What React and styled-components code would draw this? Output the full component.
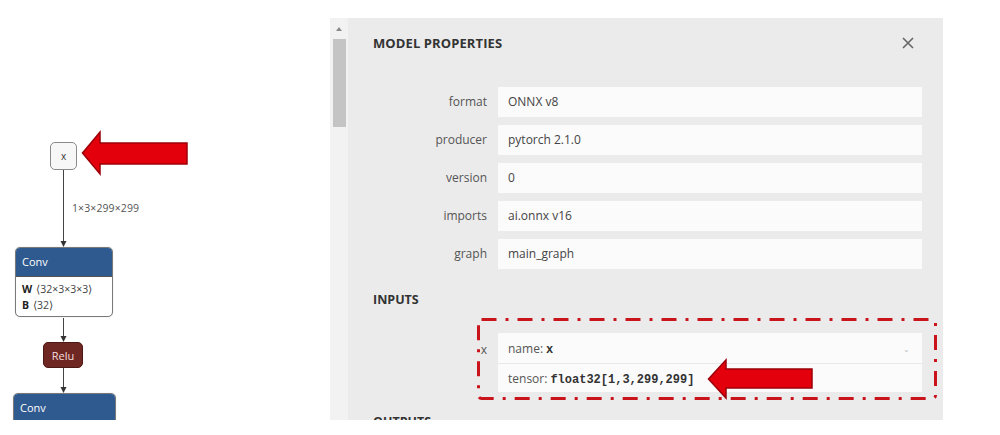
import React from "react";
import styled, { createGlobalStyle } from "styled-components";

const Global = createGlobalStyle`
  html, body { margin: 0; padding: 0; background: #ffffff; }
  body { font-family: "Open Sans", "Noto Sans", sans-serif; }
  * { box-sizing: border-box; }
`;

const Page = styled.div`
  display: flex;
  width: 1000px;
  height: 435px;
  background: #fff;
  overflow: hidden;
`;

/* ---------- graph ---------- */
const Canvas = styled.div`
  position: relative;
  width: 330px;
  height: 420px;
  flex-shrink: 0;
  overflow: hidden;
  font-family: "Open Sans", "Noto Sans", sans-serif;
`;

const Edges = styled.svg`
  position: absolute;
  left: 0;
  top: 0;
`;

const InputNode = styled.div`
  position: absolute;
  left: ${(p) => p.x}px;
  top: ${(p) => p.y}px;
  width: 27px;
  height: 28px;
  border: 1.5px solid #8a8a8a;
  border-radius: 5px;
  background: #f7f7f7;
  display: flex;
  align-items: center;
  justify-content: center;
  font-size: 10px;
  color: #333;
`;

const EdgeLabel = styled.div`
  position: absolute;
  left: ${(p) => p.x}px;
  top: ${(p) => p.y}px;
  font-size: 10.5px;
  color: #555;
  letter-spacing: 0.1px;
`;

const OpNode = styled.div`
  position: absolute;
  left: ${(p) => p.x}px;
  top: ${(p) => p.y}px;
  width: ${(p) => p.w}px;
  border: 1px solid #7a7a7a;
  border-radius: 5px;
  overflow: hidden;
  background: #fff;
  box-shadow: 0 0 1px rgba(0, 0, 0, 0.3);
`;

const OpHeader = styled.div`
  height: ${(p) => p.h || 28}px;
  background: #2f5a90;
  color: #fff;
  font-size: 11px;
  padding: 6px 0 0 6px;
`;

const OpAttrs = styled.div`
  padding: 4px 6px 3px;
  font-size: 10.5px;
  line-height: 16px;
  color: #444;
  border-top: 1px solid #555;
  b { font-weight: 700; color: #222; margin-right: 4px; }
`;

const ActNode = styled.div`
  position: absolute;
  left: ${(p) => p.x}px;
  top: ${(p) => p.y}px;
  width: 40px;
  height: 26px;
  border-radius: 5px;
  background: #6e2722;
  border: 1px solid #4e1814;
  color: #f4dede;
  font-size: 11px;
  display: flex;
  align-items: center;
  justify-content: center;
`;

const Callout = styled.svg`
  position: absolute;
  left: ${(p) => p.x}px;
  top: ${(p) => p.y}px;
  overflow: visible;
`;

/* ---------- panel ---------- */
const Panel = styled.div`
  margin-top: 18px;
  width: 613px;
  height: 402px;
  background: #ebebeb;
  display: flex;
  overflow: hidden;
  flex-shrink: 0;
`;

const ScrollTrack = styled.div`
  width: 18px;
  flex-shrink: 0;
  background: #f2f2f2;
  display: flex;
  flex-direction: column;
  align-items: center;
  padding-top: 9px;
  gap: 8px;
`;

const ScrollArrow = styled.div`
  width: 0;
  height: 0;
  border-left: 3px solid transparent;
  border-right: 3px solid transparent;
  border-bottom: 4px solid #8a8a8a;
`;

const ScrollThumb = styled.div`
  width: 13px;
  height: 88px;
  background: #c4c4c4;
`;

const Content = styled.div`
  flex: 1;
  padding: 0 21px 0 25px;
  display: flex;
  flex-direction: column;
  & > * { flex-shrink: 0; }
`;

const Header = styled.div`
  height: 50px;
  display: flex;
  align-items: center;
  justify-content: space-between;
  padding-right: 8px;
`;

const Title = styled.div`
  font-size: 13px;
  font-weight: 700;
  color: #333;
  letter-spacing: 0.1px;
`;

const Close = styled.svg`
  display: block;
`;

const Grid = styled.div`
  display: grid;
  grid-template-columns: 114px 1fr;
  column-gap: 11px;
  row-gap: 8px;
  margin-top: ${(p) => p.mt || 0}px;
  position: relative;
`;

const Label = styled.div`
  text-align: right;
  font-size: 12px;
  line-height: ${(p) => (p.small ? 16 : 30)}px;
  padding-top: ${(p) => (p.small ? 9 : 0)}px;
  color: #555;
`;

const Value = styled.div`
  height: 30px;
  background: #fbfbfb;
  padding-left: 10px;
  font-size: 12px;
  line-height: 30px;
  color: #444;
`;

const Section = styled.div`
  margin-top: ${(p) => p.mt}px;
  font-size: 12.5px;
  font-weight: 700;
  line-height: 16px;
  color: #333;
`;

const ArgBox = styled.div`
  background: #fbfbfb;
  display: flex;
  flex-direction: column;
`;

const ArgLine = styled.div`
  height: ${(p) => p.h}px;
  padding: 0 10px;
  display: flex;
  align-items: center;
  justify-content: space-between;
  font-size: 12px;
  color: #555;
  border-top: ${(p) => (p.divided ? "1px solid #e8e8e8" : "none")};
  b {
    font-family: "Liberation Mono", "DejaVu Sans Mono", monospace;
    font-weight: 700;
    color: #333;
    margin-left: 3px;
  }
`;

const Chevron = styled.span`
  font-size: 8px;
  color: #bbb;
  margin-right: 2px;
`;

const Overlay = styled.svg`
  position: absolute;
  left: ${(p) => p.x}px;
  top: ${(p) => p.y}px;
  overflow: visible;
  pointer-events: none;
`;

const properties = [
  ["format", "ONNX v8"],
  ["producer", "pytorch 2.1.0"],
  ["version", "0"],
  ["imports", "ai.onnx v16"],
  ["graph", "main_graph"],
];

function RedArrow({ w, h, head, shaftTop, shaftBottom }) {
  const mid = h / 2;
  return (
    <polygon
      points={`1.5,${mid} ${head},1 ${head},${shaftTop} ${w - 1},${shaftTop} ${w - 1},${shaftBottom} ${head},${shaftBottom} ${head},${h - 1}`}
      fill="#e3000c"
      stroke="#9c0008"
      strokeWidth="1.5"
      strokeLinejoin="miter"
    />
  );
}

export default function App() {
  return (
    <>
      <Global />
      <Page>
        <Canvas>
          <Edges width="330" height="420">
            <line x1="63.5" y1="170" x2="63.5" y2="246" stroke="#444" strokeWidth="1" />
            <path d="M60.5,241 L63.5,247 L66.5,241 Z" fill="#333" />
            <line x1="63.5" y1="318" x2="63.5" y2="341" stroke="#444" strokeWidth="1" />
            <path d="M60.5,336 L63.5,342 L66.5,336 Z" fill="#333" />
            <line x1="63.5" y1="368" x2="63.5" y2="392" stroke="#444" strokeWidth="1" />
            <path d="M60.5,387 L63.5,393 L66.5,387 Z" fill="#333" />
          </Edges>

          <InputNode x={50} y={142}>x</InputNode>
          <EdgeLabel x={72} y={201}>1×3×299×299</EdgeLabel>

          <OpNode x={15} y={247} w={98}>
            <OpHeader>Conv</OpHeader>
            <OpAttrs>
              <div><b>W</b>⟨32×3×3×3⟩</div>
              <div><b>B</b>⟨32⟩</div>
            </OpAttrs>
          </OpNode>

          <ActNode x={43} y={342}>Relu</ActNode>

          <OpNode x={13} y={393} w={103}>
            <OpHeader h={40}>Conv</OpHeader>
          </OpNode>

          <Callout x={81} y={131} width="107" height="44">
            <RedArrow w={107} h={44} head={19} shaftTop={12} shaftBottom={33} />
          </Callout>
        </Canvas>

        <Panel>
          <ScrollTrack>
            <ScrollArrow />
            <ScrollThumb />
          </ScrollTrack>
          <Content>
            <Header>
              <Title>MODEL PROPERTIES</Title>
              <Close width="12" height="12" viewBox="0 0 12 12">
                <path d="M1,1 L11,11 M11,1 L1,11" stroke="#666" strokeWidth="1.6" />
              </Close>
            </Header>

            <Grid mt={19}>
              {properties.map(([k, v]) => (
                <React.Fragment key={k}>
                  <Label>{k}</Label>
                  <Value>{v}</Value>
                </React.Fragment>
              ))}
            </Grid>

            <Section mt={23}>INPUTS</Section>

            <Grid mt={25}>
              <Label small>x</Label>
              <ArgBox>
                <ArgLine h={30}>
                  <span>name:<b>x</b></span>
                  <Chevron>⌄</Chevron>
                </ArgLine>
                <ArgLine h={29} divided>
                  <span>tensor:<b>float32[1,3,299,299]</b></span>
                </ArgLine>
              </ArgBox>

              <Overlay x={104} y={-15} width="460" height="82">
                <rect
                  x="1.5"
                  y="1.5"
                  width="457"
                  height="79"
                  rx="3"
                  fill="none"
                  stroke="#c9141c"
                  strokeWidth="3"
                  strokeDasharray="15 9 3 9"
                />
              </Overlay>
              <Overlay x={334} y={26} width="106" height="40">
                <RedArrow w={106} h={40} head={19} shaftTop={10} shaftBottom={29} />
              </Overlay>
            </Grid>

            <Section mt={22}>OUTPUTS</Section>
          </Content>
        </Panel>
      </Page>
    </>
  );
}
